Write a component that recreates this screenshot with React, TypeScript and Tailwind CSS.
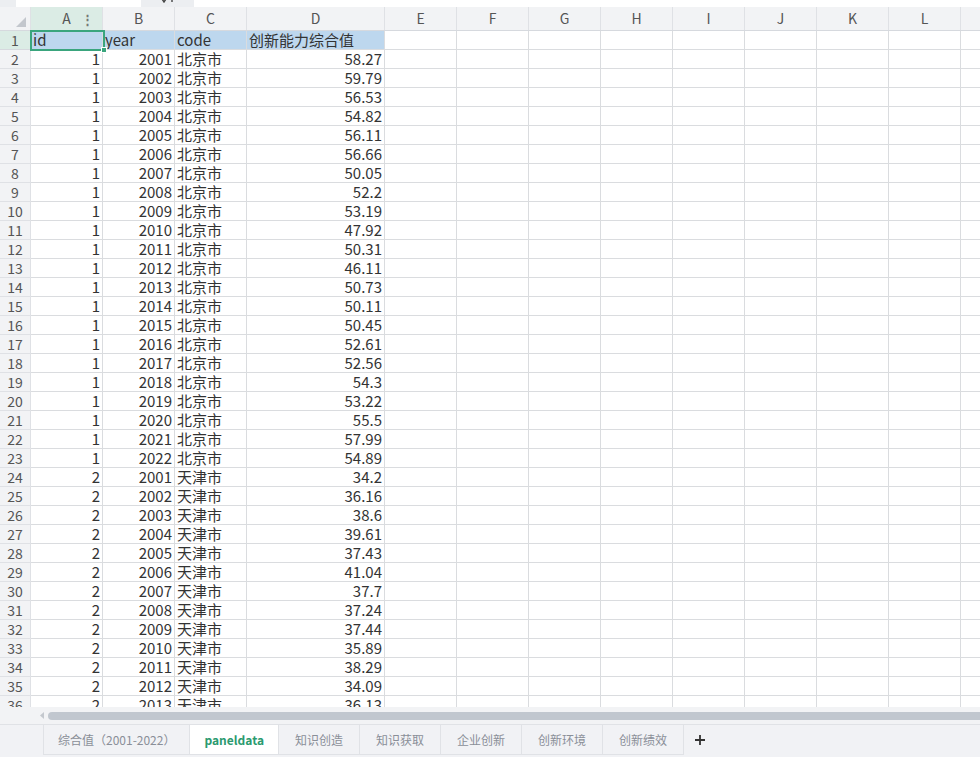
const cols = [
  { key: "A", w: "w-[72px]" },
  { key: "B", w: "w-[72px]" },
  { key: "C", w: "w-[72px]" },
  { key: "D", w: "w-[138px]" },
  { key: "E", w: "w-[72px]" },
  { key: "F", w: "w-[72px]" },
  { key: "G", w: "w-[72px]" },
  { key: "H", w: "w-[72px]" },
  { key: "I", w: "w-[72px]" },
  { key: "J", w: "w-[72px]" },
  { key: "K", w: "w-[72px]" },
  { key: "L", w: "w-[72px]" },
  { key: "M", w: "w-[72px]" },
];

const beijing = [
  "58.27", "59.79", "56.53", "54.82", "56.11", "56.66", "50.05", "52.2", "53.19", "47.92", "50.31",
  "46.11", "50.73", "50.11", "50.45", "52.61", "52.56", "54.3", "53.22", "55.5", "57.99", "54.89",
];
const tianjin = [
  "34.2", "36.16", "38.6", "39.61", "37.43", "41.04", "37.7", "37.24", "37.44", "35.89", "38.29", "34.09", "36.13",
];

type Row = { id: string; year: string; code: string; v: string };

const rows: Row[] = [
  ...beijing.map((v, i) => ({ id: "1", year: String(2001 + i), code: "北京市", v })),
  ...tianjin.map((v, i) => ({ id: "2", year: String(2001 + i), code: "天津市", v })),
];

const tabs = ["综合值（2001-2022）", "paneldata", "知识创造", "知识获取", "企业创新", "创新环境", "创新绩效"];

function Cell({ w, children, right, className = "" }: { w: string; children?: React.ReactNode; right?: boolean; className?: string }) {
  return (
    <div
      className={`${w} h-[19px] shrink-0 border-r border-b border-[#dadcdf] flex items-center overflow-hidden whitespace-nowrap px-[2px] pt-[1px] ${
        right ? "justify-end" : "justify-start"
      } ${className}`}
    >
      {children}
    </div>
  );
}

export default function App() {
  return (
    <div className="relative w-[980px] h-[757px] overflow-hidden bg-white flex flex-col font-['Noto_Sans_CJK_SC','Liberation_Sans',sans-serif] text-[#333]">
      {/* formula strip (mostly cut off) */}
      <div className="h-[7px] shrink-0 flex bg-[#eceef1]">
        <div className="w-[16px]" />
        <div className="w-[125px] bg-white" />
        <div className="w-[53px] flex items-start justify-center gap-[3px]">
          <svg width="6" height="4" viewBox="0 0 6 4" className="mt-[-1px]">
            <path d="M1 0 L3 3 L5 0" stroke="#444" strokeWidth="1.4" fill="none" />
          </svg>
          <svg width="4" height="4" viewBox="0 0 4 4" className="mt-[-1px]">
            <path d="M2 0 L2 3" stroke="#444" strokeWidth="1.4" />
          </svg>
        </div>
        <div className="flex-1 bg-white" />
      </div>

      {/* column headers */}
      <div className="h-[24px] shrink-0 flex bg-[#f2f3f5] border-b border-[#d6d9de] text-[14px] text-[#555]">
        <div className="w-[31px] shrink-0 border-r border-[#dfe1e5] relative">
          <svg width="10" height="10" viewBox="0 0 10 10" className="absolute right-[4px] bottom-[3px]">
            <path d="M10 0 L10 10 L0 10 Z" fill="#c3c7cd" />
          </svg>
        </div>
        {cols.map((c) => (
          <div
            key={c.key}
            className={`${c.w} shrink-0 border-r border-[#dfe1e5] flex items-center justify-center relative ${
              c.key === "A" ? "bg-[#dbece5]" : ""
            }`}
          >
            {c.key}
            {c.key === "A" && <span className="absolute right-[8px] text-[13px] font-bold text-[#777] leading-none">⋮</span>}
          </div>
        ))}
      </div>

      {/* grid body */}
      <div className="h-[676px] shrink-0 overflow-hidden text-[15px]">
        <div className="flex">
          <div className="w-[31px] h-[19px] shrink-0 bg-[#dbece5] border-r border-b border-[#d6d9de] flex items-center justify-center text-[14px] text-[#555]">
            1
          </div>
          <Cell w="w-[72px]" className="bg-[#bdd7ee]">id</Cell>
          <Cell w="w-[72px]" className="bg-[#bdd7ee]">year</Cell>
          <Cell w="w-[72px]" className="bg-[#bdd7ee]">code</Cell>
          <Cell w="w-[138px]" className="bg-[#bdd7ee]">创新能力综合值</Cell>
          {cols.slice(4).map((c) => (
            <Cell key={c.key} w={c.w} />
          ))}
        </div>
        {rows.map((r, i) => (
          <div key={i} className="flex">
            <div className="w-[31px] h-[19px] shrink-0 bg-[#f2f3f5] border-r border-b border-[#dfe1e5] flex items-center justify-center text-[14px] text-[#555]">
              {i + 2}
            </div>
            <Cell w="w-[72px]" right>{r.id}</Cell>
            <Cell w="w-[72px]" right>{r.year}</Cell>
            <Cell w="w-[72px]">{r.code}</Cell>
            <Cell w="w-[138px]" right>{r.v}</Cell>
            {cols.slice(4).map((c) => (
              <Cell key={c.key} w={c.w} />
            ))}
          </div>
        ))}
      </div>

      {/* selection of A1 */}
      <div className="absolute left-[30px] top-[30px] w-[75px] h-[21px] border-2 border-[#3aa57d]">
        <div className="absolute right-[-4px] bottom-[-4px] w-[6px] h-[6px] bg-[#3aa57d] border border-white" />
      </div>

      {/* horizontal scrollbar */}
      <div className="h-[18px] shrink-0 bg-[#f2f3f5] border-b border-[#e0e2e6] flex items-center">
        <div className="w-[48px] flex justify-end pr-[4px]">
          <svg width="4" height="7" viewBox="0 0 4 7">
            <path d="M4 0 L0 3.5 L4 7 Z" fill="#c4c8ce" />
          </svg>
        </div>
        <div className="flex-1 h-[8px] rounded-l-full bg-[#c1c7cf]" />
      </div>

      {/* sheet tabs */}
      <div className="flex-1 bg-[#f1f2f5] flex items-start pl-[43px]">
        <div className="flex h-[30px] border-l border-b border-[#e0e2e6]">
          {tabs.map((t, i) => {
            const active = t === "paneldata";
            return (
              <div
                key={t}
                className={`flex items-center border-r border-[#e0e2e6] text-[12px] whitespace-nowrap ${
                  i < 2 ? "px-[14px]" : "px-[16px]"
                } ${active ? "bg-white text-[#2b9a6f] font-bold" : "text-[#8a8f98]"}`}
              >
                {t}
              </div>
            );
          })}
        </div>
        <div className="h-[30px] ml-[10px] flex items-center">
          <svg width="12" height="12" viewBox="0 0 12 12">
            <path d="M6 1 V11 M1 6 H11" stroke="#333" strokeWidth="1.8" />
          </svg>
        </div>
      </div>
    </div>
  );
}
